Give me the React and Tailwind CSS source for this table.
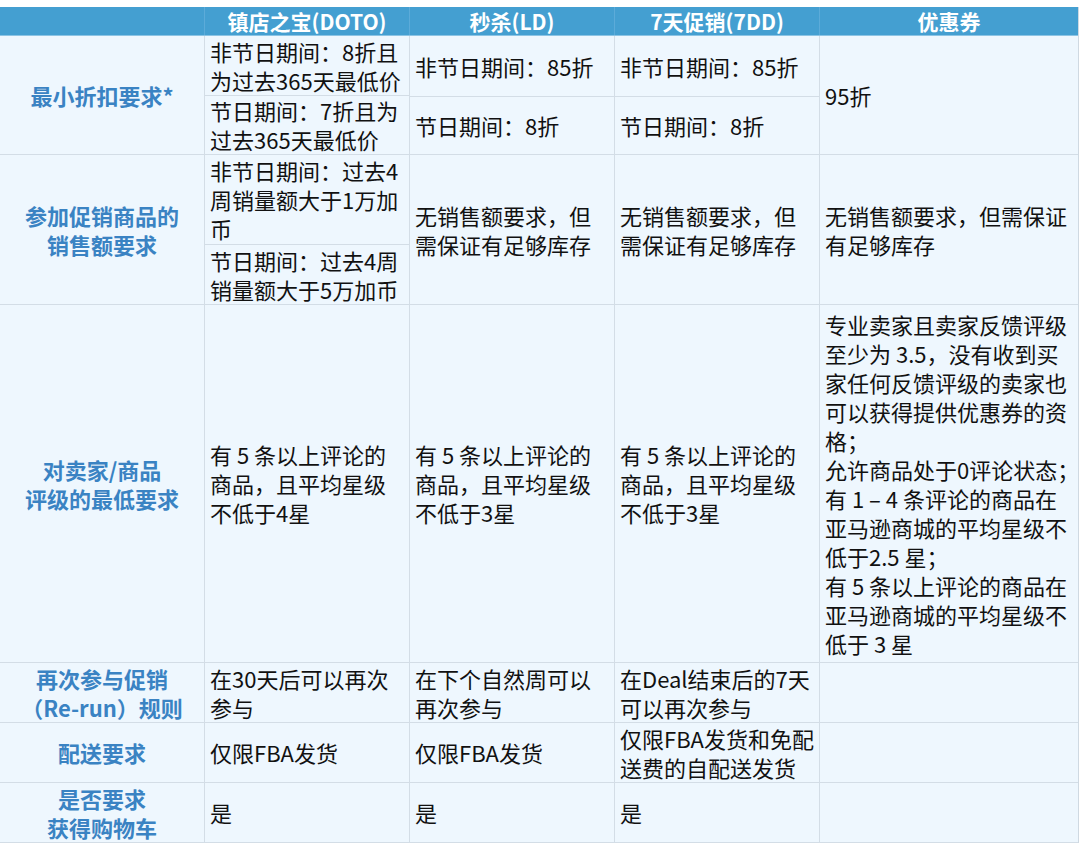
import React from "react";

const FONT = { fontFamily: '"Noto Sans CJK SC", "Noto Sans", sans-serif' };

function Lines({ lines }) {
  return (
    <div>
      {lines.map((l, i) => (
        <div key={i} className="whitespace-nowrap">{l}</div>
      ))}
    </div>
  );
}

function Cell({ lines, last }) {
  return (
    <div className={`flex items-center pl-[5px] border-b border-[#d3dde6] ${last ? "" : "border-r"} text-[22px] leading-[29px] text-[#111]`}>
      <Lines lines={lines} />
    </div>
  );
}

function SplitCell({ top, bottom, topH }) {
  return (
    <div className="flex flex-col border-b border-r border-[#d3dde6] text-[22px] leading-[29px] text-[#111]">
      <div className={`flex items-center pl-[5px] border-b border-[#d3dde6] ${topH}`}>
        <Lines lines={top} />
      </div>
      <div className="flex flex-1 items-center pl-[5px]">
        <Lines lines={bottom} />
      </div>
    </div>
  );
}

function Label({ lines }) {
  return (
    <div className="flex items-center justify-center text-center border-b border-r border-[#d3dde6] text-[22px] leading-[29px] font-bold text-[#3a83c3]">
      <Lines lines={lines} />
    </div>
  );
}

function Head({ text, last }) {
  return (
    <div className={`flex items-center justify-center text-[21px] leading-[26px] font-bold text-white ${last ? "" : "border-r border-[#5cabd9]"}`}>
      <span>{text}</span>
    </div>
  );
}

export default function App() {
  return (
    <div className="w-[1080px] h-[853px] bg-white pt-[7px]" style={FONT}>
      <div className="grid w-[1079px] grid-cols-[205px_205px_205px_205px_258px] grid-rows-[29px_119px_150px_358px_60px_60px_60px] bg-[#eef7fe] border-r border-[#cfd9e2]">
        <div className="bg-[#449fd1] col-span-5 grid grid-cols-[205px_205px_205px_205px_258px] border-b border-[#8cc4e4]">
          <Head text="" />
          <Head text="镇店之宝(DOTO)" />
          <Head text="秒杀(LD)" />
          <Head text="7天促销(7DD)" />
          <Head text="优惠券" last />
        </div>

        <Label lines={["最小折扣要求*"]} />
        <SplitCell topH="h-[61px]" top={["非节日期间：8折且", "为过去365天最低价"]} bottom={["节日期间：7折且为", "过去365天最低价"]} />
        <SplitCell topH="h-[61px]" top={["非节日期间：85折"]} bottom={["节日期间：8折"]} />
        <SplitCell topH="h-[61px]" top={["非节日期间：85折"]} bottom={["节日期间：8折"]} />
        <Cell lines={["95折"]} last />

        <Label lines={["参加促销商品的", "销售额要求"]} />
        <SplitCell topH="h-[90px]" top={["非节日期间：过去4", "周销量额大于1万加", "币"]} bottom={["节日期间：过去4周", "销量额大于5万加币"]} />
        <Cell lines={["无销售额要求，但", "需保证有足够库存"]} />
        <Cell lines={["无销售额要求，但", "需保证有足够库存"]} />
        <Cell lines={["无销售额要求，但需保证", "有足够库存"]} last />

        <Label lines={["对卖家/商品", "评级的最低要求"]} />
        <Cell lines={["有 5 条以上评论的", "商品，且平均星级", "不低于4星"]} />
        <Cell lines={["有 5 条以上评论的", "商品，且平均星级", "不低于3星"]} />
        <Cell lines={["有 5 条以上评论的", "商品，且平均星级", "不低于3星"]} />
        <Cell
          last
          lines={[
            "专业卖家且卖家反馈评级",
            "至少为 3.5，没有收到买",
            "家任何反馈评级的卖家也",
            "可以获得提供优惠券的资",
            "格；",
            "允许商品处于0评论状态；",
            "有 1 – 4 条评论的商品在",
            "亚马逊商城的平均星级不",
            "低于2.5 星；",
            "有 5 条以上评论的商品在",
            "亚马逊商城的平均星级不",
            "低于 3 星",
          ]}
        />

        <Label lines={["再次参与促销", "（Re-run）规则"]} />
        <Cell lines={["在30天后可以再次", "参与"]} />
        <Cell lines={["在下个自然周可以", "再次参与"]} />
        <Cell lines={["在Deal结束后的7天", "可以再次参与"]} />
        <Cell lines={[]} last />

        <Label lines={["配送要求"]} />
        <Cell lines={["仅限FBA发货"]} />
        <Cell lines={["仅限FBA发货"]} />
        <Cell lines={["仅限FBA发货和免配", "送费的自配送发货"]} />
        <Cell lines={[]} last />

        <Label lines={["是否要求", "获得购物车"]} />
        <Cell lines={["是"]} />
        <Cell lines={["是"]} />
        <Cell lines={["是"]} />
        <Cell lines={[]} last />
      </div>
    </div>
  );
}
